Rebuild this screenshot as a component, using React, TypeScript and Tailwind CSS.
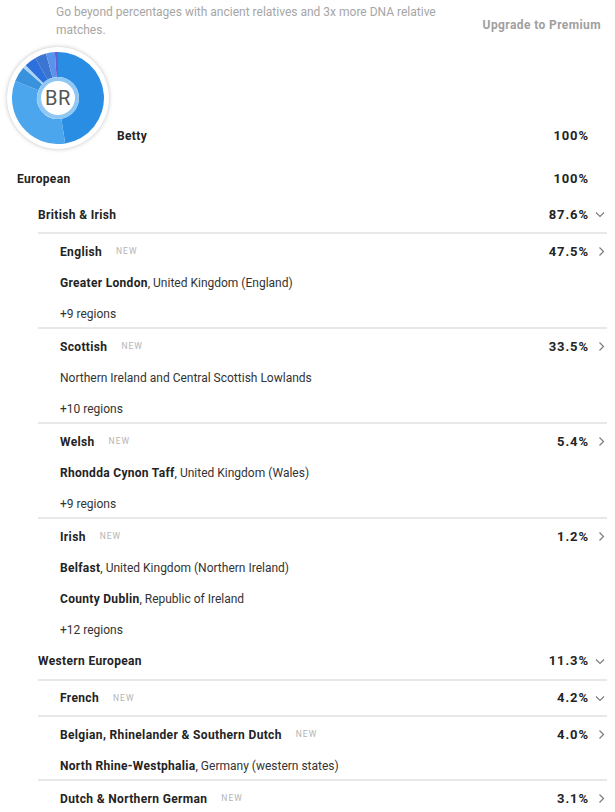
import React from 'react';

type Sub = {
  name: string;
  pct: string;
  open?: boolean;
  lines: { bold?: string; rest?: string }[];
  h?: string;
};

const Chevron: React.FC<{ dir: 'down' | 'right' | 'none' }> = ({ dir }) => {
  if (dir === 'none') return <span className="w-[18px]" />;
  return (
    <span className="w-[18px] flex justify-end items-center pr-[2px]">
      {dir === 'right' ? (
        <svg width="7" height="11" viewBox="0 0 7 11" fill="none">
          <path d="M1.5 1.5 L5.5 5.5 L1.5 9.5" stroke="#7c7c7c" strokeWidth="1.2" />
        </svg>
      ) : (
        <svg width="10" height="7" viewBox="0 0 10 7" fill="none">
          <path d="M1 1.5 L5 5.5 L9 1.5" stroke="#7c7c7c" strokeWidth="1.1" />
        </svg>
      )}
    </span>
  );
};

const slices = [
  { v: 47.5, c: '#2a8de4' },
  { v: 33.5, c: '#4ba6ee' },
  { v: 5.4, c: '#3a92dc' },
  { v: 1.2, c: '#a9d4f5' },
  { v: 4.2, c: '#2b70dc' },
  { v: 4.0, c: '#3c74d2' },
  { v: 3.1, c: '#5894ec' },
  { v: 1.1, c: '#6a5cd6' },
];

const arc = (cx: number, cy: number, r0: number, r1: number, a0: number, a1: number) => {
  const p = (r: number, a: number) => {
    const t = ((a - 90) * Math.PI) / 180;
    return `${(cx + r * Math.cos(t)).toFixed(2)} ${(cy + r * Math.sin(t)).toFixed(2)}`;
  };
  const large = a1 - a0 > 180 ? 1 : 0;
  return `M${p(r1, a0)} A${r1} ${r1} 0 ${large} 1 ${p(r1, a1)} L${p(r0, a1)} A${r0} ${r0} 0 ${large} 0 ${p(r0, a0)} Z`;
};

const Avatar = () => {
  let acc = 0;
  const total = slices.reduce((s, x) => s + x.v, 0);
  return (
    <div className="w-[102px] h-[102px] rounded-full bg-white shadow-[0_0_4px_rgba(0,0,0,0.25)] flex items-center justify-center relative">
      <svg width="92" height="92" viewBox="0 0 92 92">
        {slices.map((s, i) => {
          const a0 = (acc / total) * 360;
          acc += s.v;
          const a1 = (acc / total) * 360;
          return <path key={i} d={arc(46, 46, 21, 46, a0, a1)} fill={s.c} />;
        })}
        <circle cx="46" cy="46" r="21" fill="#8ec6f4" />
        <circle cx="46" cy="46" r="17" fill="#ffffff" />
      </svg>
      <span className="absolute inset-0 flex items-center justify-center text-[20px] text-[#555] tracking-[0.5px]">BR</span>
    </div>
  );
};

const british: Sub[] = [
  { name: 'English', pct: '47.5%', lines: [{ bold: 'Greater London', rest: ', United Kingdom (England)' }, { rest: '+9 regions' }] },
  { name: 'Scottish', pct: '33.5%', lines: [{ rest: 'Northern Ireland and Central Scottish Lowlands' }, { rest: '+10 regions' }] },
  { name: 'Welsh', pct: '5.4%', lines: [{ bold: 'Rhondda Cynon Taff', rest: ', United Kingdom (Wales)' }, { rest: '+9 regions' }] },
  {
    name: 'Irish',
    pct: '1.2%',
    lines: [
      { bold: 'Belfast', rest: ', United Kingdom (Northern Ireland)' },
      { bold: 'County Dublin', rest: ', Republic of Ireland' },
      { rest: '+12 regions' },
    ],
  },
];

const western: Sub[] = [
  { name: 'French', pct: '4.2%', open: true, lines: [], h: 'h-[34px]' },
  { name: 'Belgian, Rhinelander & Southern Dutch', pct: '4.0%', lines: [{ bold: 'North Rhine-Westphalia', rest: ', Germany (western states)' }] },
  { name: 'Dutch & Northern German', pct: '3.1%', lines: [] },
];

const label = 'font-bold text-[12px] text-[#232323] tracking-[0.35px]';
const pctCls = 'ml-auto font-bold text-[13px] text-[#232323] tracking-[0.9px]';

const SubBlock: React.FC<{ s: Sub }> = ({ s }) => (
  <div
    className={`border-t-2 border-[#e8e8e8] ${s.h ? '' : 'pt-[2px]'} ${s.lines.length ? '-mb-[2px]' : ''}`}
  >
    <div className={`${s.h ?? 'h-[31px]'} flex items-center pl-[22px]`}>
      <span className={label}>{s.name}</span>
      <span className="ml-[14px] text-[8.5px] text-[#b4b4b4] tracking-[1px]">NEW</span>
      <span className={pctCls}>{s.pct}</span>
      <Chevron dir={s.open ? 'down' : 'right'} />
    </div>
    {s.lines.map((l, i) => (
      <div key={i} className="h-[31px] flex items-center pl-[22px] text-[12px] text-[#333]">
        {l.bold && <span className="font-bold tracking-[0.3px] text-[#232323]">{l.bold}</span>}
        <span>{l.rest}</span>
      </div>
    ))}
  </div>
);

export default function App() {
  return (
    <div className="w-[615px] h-[812px] overflow-hidden bg-white font-['Roboto',sans-serif] pr-[8px]">
      <div className="flex justify-between pt-[3px]">
        <p className="pl-[56px] w-[470px] text-[12px] leading-[18px] text-[#a6a6a6]">
          Go beyond percentages with ancient relatives and 3x more DNA relative matches.
        </p>
        <span className="mt-[13px] mr-[6px] text-[12px] font-bold text-[#a0a0a0] tracking-[0.4px]">Upgrade to Premium</span>
      </div>

      <div className="flex h-[122px]">
        <div className="ml-[7px] mt-[8px]">
          <Avatar />
        </div>
        <div className="flex-1 flex items-center h-[20px] mt-[87px] ml-[8px]">
          <span className={label}>Betty</span>
          <span className={pctCls}>100%</span>
          <Chevron dir="none" />
        </div>
      </div>

      <div className="h-[36px] flex items-center pl-[17px]">
        <span className={label}>European</span>
        <span className={pctCls}>100%</span>
        <Chevron dir="none" />
      </div>

      <div className="h-[35px] flex items-center pl-[38px]">
        <span className={label}>British &amp; Irish</span>
        <span className={pctCls}>87.6%</span>
        <Chevron dir="down" />
      </div>
      <div className="ml-[38px]">
        {british.map((s) => (
          <SubBlock key={s.name} s={s} />
        ))}
      </div>

      <div className="h-[36px] flex items-center pl-[38px]">
        <span className={label}>Western European</span>
        <span className={pctCls}>11.3%</span>
        <Chevron dir="down" />
      </div>
      <div className="ml-[38px]">
        {western.map((s) => (
          <SubBlock key={s.name} s={s} />
        ))}
      </div>
    </div>
  );
}
